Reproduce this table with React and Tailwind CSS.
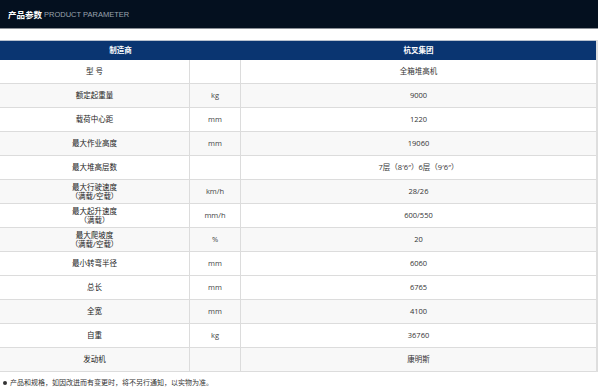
import React from 'react';

const rows = [
  { label: ['型 号'], unit: '', value: '全箱堆高机', gray: false },
  { label: ['额定起重量'], unit: 'kg', value: '9000', gray: true },
  { label: ['载荷中心距'], unit: 'mm', value: '1220', gray: false },
  { label: ['最大作业高度'], unit: 'mm', value: '19060', gray: true },
  { label: ['最大堆高层数'], unit: '', value: '7层（8′6″）6层（9′6″）', gray: false },
  { label: ['最大行驶速度', '（满载/空载）'], unit: 'km/h', value: '28/26', gray: true },
  { label: ['最大起升速度', '（满载）'], unit: 'mm/h', value: '600/550', gray: false },
  { label: ['最大爬坡度', '（满载/空载）'], unit: '%', value: '20', gray: true },
  { label: ['最小转弯半径'], unit: 'mm', value: '6060', gray: false },
  { label: ['总长'], unit: 'mm', value: '6765', gray: false },
  { label: ['全宽'], unit: 'mm', value: '4100', gray: true },
  { label: ['自重'], unit: 'kg', value: '36760', gray: false },
  { label: ['发动机'], unit: '', value: '康明斯', gray: true },
];

export default function App() {
  return (
    <div className="w-[600px] h-[389px] bg-white overflow-hidden font-['Open_Sans','Noto_Sans_CJK_SC',sans-serif] text-[#333]">
      {/* Title bar */}
      <div className="w-[598px] h-[29px] bg-[#04101f] border-b border-[#8a8f96] flex items-center pl-[8px] pt-[2px]">
        <span className="text-white font-bold text-[8.5px] leading-none">产品参数</span>
        <span className="ml-[2px] text-[#9aa3ae] text-[7.5px] leading-none font-['Liberation_Sans',sans-serif]">PRODUCT PARAMETER</span>
      </div>

      {/* Table */}
      <div className="mt-[11px] w-[598px] border-r-2 border-[#dedede]">
        <div className="grid grid-cols-[241px_1fr] h-[20px] bg-[#0a3571] border-t border-[#b9c2cf] text-white font-bold text-[7.5px]">
          <div className="flex items-center justify-center">制造商</div>
          <div className="flex items-center justify-center">杭叉集团</div>
        </div>
        {rows.map((r, i) => (
          <div
            key={i}
            className={`grid grid-cols-[190px_51px_1fr] h-[24px] border-b border-[#dcdcdc] text-[7.5px] leading-[9px] ${r.gray ? 'bg-[#f8f8f8]' : 'bg-white'}`}
          >
            <div className="flex flex-col items-center justify-center border-r border-[#dcdcdc] text-[#222]">
              {r.label.map((l, j) => (
                <span key={j}>{l}</span>
              ))}
            </div>
            <div className="flex items-center justify-center border-r border-[#dcdcdc] text-[#444]">{r.unit}</div>
            <div className="flex items-center justify-center">{r.value}</div>
          </div>
        ))}
      </div>

      {/* Note */}
      <div className="pl-[3px] mt-[6px] flex items-center gap-[3px] text-[7px] leading-[9px] text-[#333]">
        <span className="w-[4px] h-[4px] rounded-full bg-[#333]" />
        <span>产品和规格，如因改进而有变更时，将不另行通知，以实物为准。</span>
      </div>
    </div>
  );
}
